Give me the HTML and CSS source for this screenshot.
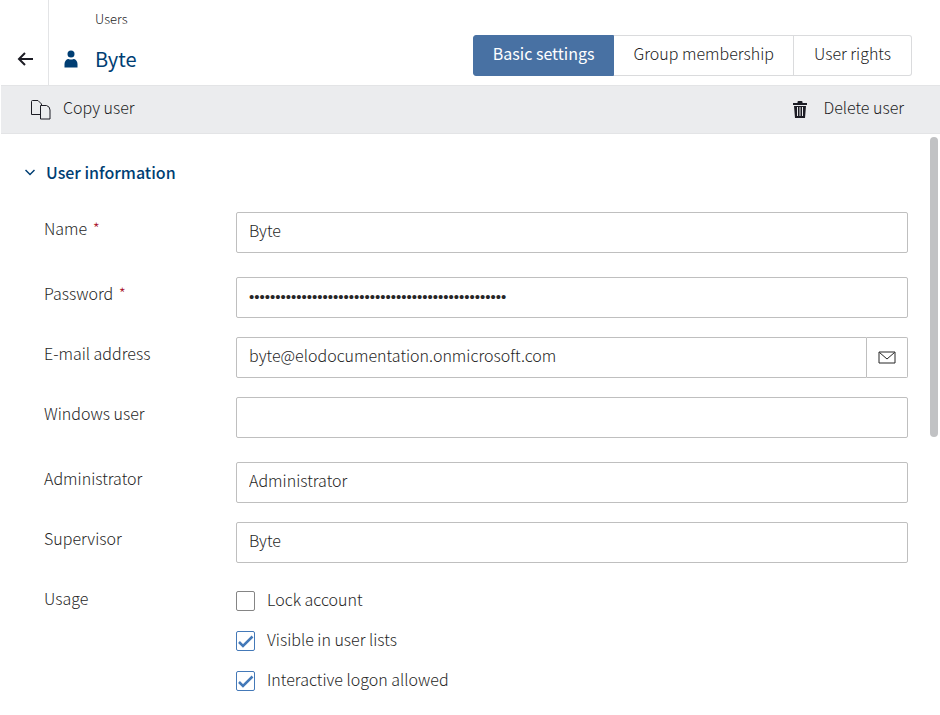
FILE: index.html
```html
<!DOCTYPE html>
<html lang="en">
    <head>
        <meta charset="utf-8">
        <meta name="viewport" content="width=device-width, initial-scale=1">
        <title>Users - Byte</title>
        <link rel="stylesheet" href="styles.css">
    </head>
    <body>
        <header class="header">
            <button type="button" class="back" aria-label="Back">
                <svg width="16" height="14" viewBox="0 0 16 14"><path d="M8 1L2 7l6 6M2 7h14" fill="none" stroke="currentColor" stroke-width="2"/></svg>
            </button>
            <div class="heading">
                <a class="crumb" href="#">Users</a>
                <h1 class="title">
                    <svg width="14" height="18" viewBox="0 0 14 18" fill="currentColor"><circle cx="7" cy="4" r="3.500"/><path d="M.5 17.500V14c0-3 2-5 4-5q2.500 1 5 0c2 0 4 2 4 5v3.500z"/></svg>
                    <span>Byte</span>
                </h1>
            </div>
            <nav class="tabs">
                <button type="button" class="tab active">Basic settings</button>
                <button type="button" class="tab">Group membership</button>
                <button type="button" class="tab">User rights</button>
            </nav>
        </header>
        <div class="toolbar">
            <button type="button" class="tool">
                <svg width="20" height="20" viewBox="0 0 20 20" fill="none" stroke="currentColor"><path d="M9 14.500H.5V1.500q0-1 1-1H7l3.500 3.500v1.500"/><path d="M9.500 5.500h6q3.500 1 3.500 4.500v9H9.500z"/></svg>
                <span>Copy user</span>
            </button>
            <button type="button" class="tool delete">
                <svg width="14" height="17" viewBox="0 0 14 17"><path d="M0 2h4.500V1q0-1 1-1h3q1 0 1 1v1H14v2H0zM1 5h12l-1 12H2z" fill="currentColor"/><path d="M4.500 6v9M7 6v9M9.500 6v9" stroke="#ebecee"/></svg>
                <span>Delete user</span>
            </button>
        </div>
        <main class="main">
            <form class="form">
                <h2 class="section">
                    <svg width="10" height="7" viewBox="0 0 10 7"><path d="M.5 1L5 5.500 9.500 1" fill="none" stroke="currentColor" stroke-width="1.500"/></svg>
                    <span>User information</span>
                </h2>
                <div class="row wide">
                    <label for="name">Name <em>*</em></label>
                    <input class="field" id="name" type="text" value="Byte">
                </div>
                <div class="row">
                    <label for="password">Password <em>*</em></label>
                    <input class="field" id="password" type="password" value="0000000000000000000000000000000000000000000000000">
                </div>
                <div class="row">
                    <label for="email">E-mail address</label>
                    <div class="group">
                        <input class="field" id="email" type="text" value="byte@elodocumentation.onmicrosoft.com">
                        <button type="button" class="mail" aria-label="Send e-mail">
                            <svg width="18" height="13" viewBox="0 0 18 13" fill="none" stroke="currentColor"><path d="M1 1h16v11H1z"/><path d="M1.500 1.500L9 8l7.500-6.500"/></svg>
                        </button>
                    </div>
                </div>
                <div class="row wide">
                    <label for="windows">Windows user</label>
                    <input class="field" id="windows" type="text">
                </div>
                <div class="row">
                    <label for="admin">Administrator</label>
                    <input class="field" id="admin" type="text" value="Administrator">
                </div>
                <div class="row">
                    <label for="supervisor">Supervisor</label>
                    <input class="field" id="supervisor" type="text" value="Byte">
                </div>
                <div class="row" role="group" aria-labelledby="usage">
                    <span class="label" id="usage">Usage</span>
                    <div class="checks">
                        <label class="check"><input type="checkbox"> <span>Lock account</span></label>
                        <label class="check"><input type="checkbox" checked> <span>Visible in user lists</span></label>
                        <label class="check"><input type="checkbox" checked> <span>Interactive logon allowed</span></label>
                    </div>
                </div>
            </form>
            <div class="scroll"><div class="thumb"></div></div>
        </main>
    </body>
</html>
```

FILE: styles.css
```css
*{margin:0;padding:0;box-sizing:border-box;}
body{
    background:#fff;
    color:#262626;
    font:300 16px/24px "Noto Sans CJK SC", sans-serif;
}
button, input{font:inherit;color:inherit;}
button{background:none;border:0;cursor:pointer;}
svg{display:block;flex:none;}

/* header */
.header{display:flex;height:85px;color:#1c1c24;}
.back{width:49px;padding:32px 0 0 17px;border-right:1px solid #e3e4e6;}
.heading{flex:1;padding:7px 0 0 15px;}
.crumb{display:block;margin-left:31px;font-size:13px;color:inherit;text-decoration:none;}
.title{display:flex;align-items:center;gap:17px;margin-top:12px;font-size:20px;line-height:32px;font-weight:400;color:#003e73;}
.tabs{display:flex;margin:35px 28px 0 0;height:41px;}
.tab{padding:0 19px 5px;border:1px solid #dadbdd;border-left-width:0;}
.tab:last-child{padding:0 20px 5px;border-radius:0 3px 3px 0;}
.tab.active{background:#4871a3;border-color:#4871a3;border-left-width:1px;border-radius:3px 0 0 3px;color:#fff;font-weight:400;}

/* toolbar */
.toolbar{display:flex;justify-content:space-between;height:49px;margin-left:1px;padding:0 36px 0 30px;background:#ebecee;border:solid #e3e4e6;border-width:1px 0;color:#1c1c24;}
.tool{display:flex;align-items:center;gap:12px;}
.tool span{padding-bottom:5px;}
.delete{gap:16px;}

/* form */
.main{display:flex;align-items:flex-start;}
.form{flex:1;padding:26px 22px 0 25px;}
.section{display:flex;align-items:center;gap:11px;margin-bottom:28px;font-size:16px;line-height:24px;font-weight:500;color:#003e73;}
.row{display:flex;margin-bottom:19px;padding-left:19px;}
.row.wide{margin-bottom:24px;}
.row > label, .label{width:192px;flex:none;padding-top:4px;}
.row em{margin-left:2px;font-style:normal;color:#a8122a;}
.field{flex:1;min-width:0;height:41px;padding:0 12px 5px;border:1px solid #bfbfbf;border-radius:2px;background:#fff;}
#password{padding-bottom:2px;font:400 15px "Liberation Sans", sans-serif;}
.group{display:flex;flex:1;}
.group .field{border-radius:2px 0 0 2px;}
.mail{display:flex;align-items:center;justify-content:center;width:41px;border:1px solid #bfbfbf;border-left:0;border-radius:0 2px 2px 0;}
.checks{padding-top:7px;}
.check{display:flex;align-items:center;gap:12px;height:24px;margin-bottom:16px;}
.check span{padding-bottom:4px;}
.check input{
    appearance:none;
    width:19px;
    height:20px;
    border:1px solid #858585;
    border-radius:2px;
}
.check input:checked{
    border-color:#4479b8;
    background:url("data:image/svg+xml,%3Csvg xmlns='http://www.w3.org/2000/svg' viewBox='0 0 17 18'%3E%3Cpath d='M2 10l4 4L15.500 4.500' fill='none' stroke='%234479b8' stroke-width='2.500'/%3E%3C/svg%3E") center no-repeat;
}

.scroll{width:10px;padding-top:3px;}
.thumb{width:8px;height:300px;border-radius:4px;background:#c1c2c4;}
```
